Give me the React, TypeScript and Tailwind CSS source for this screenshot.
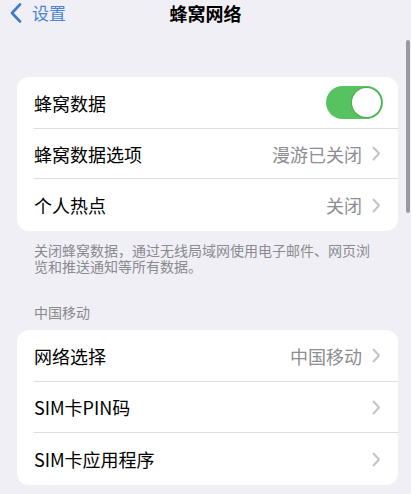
import React from 'react'

const font = { fontFamily: '"Noto Sans CJK SC", "Noto Sans", sans-serif' }

const Chevron: React.FC = () => (
  <svg width="9" height="15" viewBox="0 0 9 15" className="ml-[10px] shrink-0">
    <path d="M1.5 1.5 L7 7.5 L1.5 13.5" fill="none" stroke="#c4c4c8" strokeWidth="2" strokeLinecap="round" strokeLinejoin="round" />
  </svg>
)

const Toggle: React.FC = () => (
  <div className="w-[57px] h-[33px] -mr-[2px] rounded-full bg-[#56c260] p-[2px] flex justify-end">
    <div className="w-[29px] h-[29px] rounded-full bg-white shadow-[0_0_0_1px_rgba(60,120,60,0.35)]" />
  </div>
)

interface RowProps {
  label: string
  value?: string
  toggle?: boolean
  last?: boolean
  height?: string
}

const Row: React.FC<RowProps> = ({ label, value, toggle, last, height = 'h-[51px]' }) => (
  <div className={`flex items-center pl-[17px] ${height}`}>
    <div className={`flex-1 h-full flex items-center pr-[17px] ${last ? '' : 'border-b border-[#dedde2]'}`}>
      <span className="flex-1 text-[18px] text-black leading-none">{label}</span>
      {toggle ? (
        <Toggle />
      ) : (
        <>
          {value && <span className="text-[18px] text-[#8d8d92] leading-none">{value}</span>}
          <Chevron />
        </>
      )}
    </div>
  </div>
)

export default function App() {
  return (
    <div className="relative w-[411px] h-[494px] overflow-hidden bg-[#f0eff5]" style={font}>
      <div className="relative h-[25px] flex items-center">
        <div className="flex items-center pl-[9px] text-[#4a84d2]">
          <svg width="14" height="20" viewBox="0 0 14 20">
            <path d="M11 1.5 L3 10 L11 18.5" fill="none" stroke="#3f7ccd" strokeWidth="2.6" strokeLinecap="round" strokeLinejoin="round" />
          </svg>
          <span className="ml-[9px] text-[17px] leading-none">设置</span>
        </div>
        <div className="absolute inset-0 flex items-center justify-center">
          <span className="text-[18px] font-bold text-black leading-none">蜂窝网络</span>
        </div>
      </div>

      <div className="pl-[17px] pr-[13px] pt-[52px]">
        <div className="bg-white rounded-[12px] overflow-hidden">
          <Row label="蜂窝数据" toggle height="h-[52px]" />
          <Row label="蜂窝数据选项" value="漫游已关闭" height="h-[50px]" />
          <Row label="个人热点" value="关闭" last height="h-[52px]" />
        </div>

        <p className="pl-[17px] pr-[20px] pt-[11px] text-[14px] leading-[16px] text-[#8a8a8f]">
          关闭蜂窝数据，通过无线局域网使用电子邮件、网页浏览和推送通知等所有数据。
        </p>

        <p className="px-[17px] pt-[30px] text-[14px] leading-[16px] text-[#8a8a8f]">中国移动</p>

        <div className="mt-[10px] bg-white rounded-[12px] overflow-hidden">
          <Row label="网络选择" value="中国移动" height="h-[52px]" />
          <Row label="SIM卡PIN码" />
          <Row label="SIM卡应用程序" last height="h-[52px]" />
        </div>
      </div>

      <div className="absolute right-[1px] top-[40px] w-[4px] h-[173px] rounded-full bg-[#9a9a9e]" />
    </div>
  )
}
